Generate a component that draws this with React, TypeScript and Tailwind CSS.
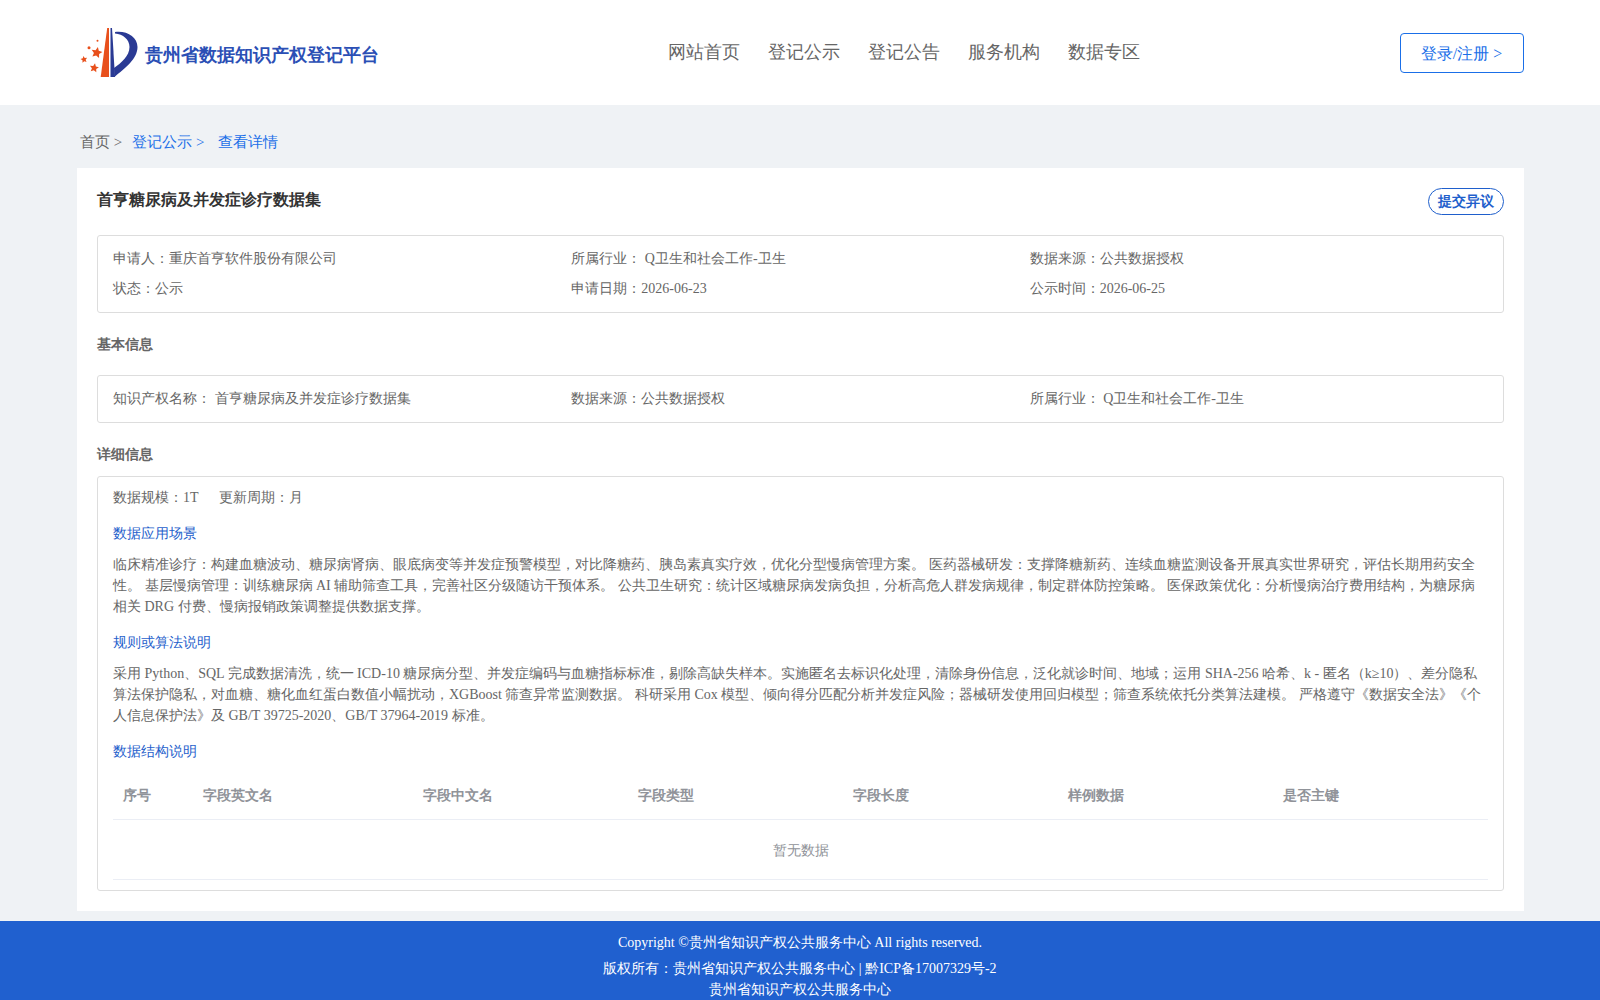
const serif = "font-['Liberation_Serif',serif]";

function star(cx: number, cy: number, r: number, rot: number) {
  const pts: string[] = [];
  for (let i = 0; i < 10; i++) {
    const rad = i % 2 === 0 ? r : r * 0.48;
    const a = ((-90 + rot + i * 36) * Math.PI) / 180;
    pts.push(`${(cx + rad * Math.cos(a)).toFixed(2)},${(cy + rad * Math.sin(a)).toFixed(2)}`);
  }
  return pts.join(" ");
}

function Logo() {
  return (
    <svg width="60" height="52" viewBox="0 0 60 52" className="shrink-0">
      <polygon points="20.7,50 29,50 29,1 27.2,1" fill="#e8501c" />
      <polygon points="30.5,50 35,50 32,1 30.5,1" fill="#2a3a94" />
      <path d="M35 5 C47 3.5 57.5 10 57.5 20 C57.5 32 45 41 34.5 50 L34 41 C41 36 49.5 29 49.5 20 C49.5 12.5 43 7 35 6.5 Z" fill="#2a3a94" />
      <polygon points={star(16.7, 25.7, 5.8, 12)} fill="#e8501c" />
      <polygon points={star(4, 32.5, 3.5, -10)} fill="#e8501c" />
      <polygon points={star(14.2, 41, 4.8, 10)} fill="#e8501c" />
      <circle cx="9" cy="20.7" r="1.5" fill="#e8501c" />
      <circle cx="17.5" cy="13.7" r="1" fill="#e8501c" />
    </svg>
  );
}

function Info({ children }: { children: React.ReactNode }) {
  return <div className="text-[14px] leading-[20px] text-[#666]">{children}</div>;
}

const cols = [
  ["序号", "w-[80px]"],
  ["字段英文名", "w-[220px]"],
  ["字段中文名", "w-[215px]"],
  ["字段类型", "w-[215px]"],
  ["字段长度", "w-[215px]"],
  ["样例数据", "w-[215px]"],
  ["是否主键", "flex-1"],
];

export default function App() {
  return (
    <div className={`${serif} w-[1600px] h-[1000px] overflow-hidden bg-[#eff2f5] flex flex-col`}>
      <header className="h-[105px] bg-white flex items-start justify-between pl-[80px] pr-[76px]">
        <div className="flex items-start mt-[27px] gap-[5px]">
          <Logo />
          <span className="text-[18px] leading-[26px] mt-[15px] font-bold text-[#2b4fb5]">贵州省数据知识产权登记平台</span>
        </div>
        <nav className="flex gap-[28px] mt-[39px] ml-[29px] text-[18px] leading-[26px] text-[#666]">
          <span>网站首页</span><span>登记公示</span><span>登记公告</span><span>服务机构</span><span>数据专区</span>
        </nav>
        <button className="mt-[33px] w-[124px] h-[40px] rounded-[4px] border border-[#1a6fe8] text-[#1a6fe8] text-[16px] bg-white pt-[1px] pr-[1px]">登录/注册 &gt;</button>
      </header>

      <div className="h-[63px] pl-[80px] pt-[28px] text-[15px] leading-[19px] flex">
        <span className="text-[#666]">首页 &gt;</span>
        <span className="text-[#1a6fe8] ml-[10px]">登记公示 &gt;</span>
        <span className="text-[#1a6fe8] ml-[14px]">查看详情</span>
      </div>

      <main className="ml-[77px] w-[1447px] h-[743px] bg-white px-[20px] pt-[20px]">
        <div className="flex justify-between items-start h-[47px]">
          <h1 className="text-[16px] leading-[24px] font-bold text-[#333]">首亨糖尿病及并发症诊疗数据集</h1>
          <button className="w-[76px] h-[27px] rounded-[14px] border border-[#1f5fcc] bg-white text-[14px] font-bold text-[#1f5fcc]">提交异议</button>
        </div>

        <section className="h-[78px] border border-[#ddd] rounded-[3px] px-[15px] pt-[13px] grid grid-cols-3 gap-y-[10px] content-start">
          <Info>申请人：重庆首亨软件股份有限公司</Info>
          <Info>所属行业： Q卫生和社会工作-卫生</Info>
          <Info>数据来源：公共数据授权</Info>
          <Info>状态：公示</Info>
          <Info>申请日期：2026-06-23</Info>
          <Info>公示时间：2026-06-25</Info>
        </section>

        <h2 className="mt-[22px] mb-[20px] text-[14px] leading-[20px] font-bold text-[#666]">基本信息</h2>

        <section className="h-[48px] border border-[#ddd] rounded-[3px] px-[15px] pt-[13px] grid grid-cols-3 content-start">
          <Info>知识产权名称： 首亨糖尿病及并发症诊疗数据集</Info>
          <Info>数据来源：公共数据授权</Info>
          <Info>所属行业： Q卫生和社会工作-卫生</Info>
        </section>

        <h2 className="mt-[22px] mb-[11px] text-[14px] leading-[20px] font-bold text-[#666]">详细信息</h2>

        <section className="h-[415px] border border-[#ddd] rounded-[3px] px-[15px] pt-[11px]">
          <div className="flex gap-[20px] text-[14px] leading-[20px] text-[#666]"><span>数据规模：1T</span><span>更新周期：月</span></div>
          <div className="mt-[16px] text-[14px] leading-[20px] text-[#1f5fcc]">数据应用场景</div>
          <p className="mt-[10px] text-[14px] leading-[21px] text-[#666]">临床精准诊疗：构建血糖波动、糖尿病肾病、眼底病变等并发症预警模型，对比降糖药、胰岛素真实疗效，优化分型慢病管理方案。 医药器械研发：支撑降糖新药、连续血糖监测设备开展真实世界研究，评估长期用药安全性。 基层慢病管理：训练糖尿病 AI 辅助筛查工具，完善社区分级随访干预体系。 公共卫生研究：统计区域糖尿病发病负担，分析高危人群发病规律，制定群体防控策略。 医保政策优化：分析慢病治疗费用结构，为糖尿病相关 DRG 付费、慢病报销政策调整提供数据支撑。</p>
          <div className="mt-[16px] text-[14px] leading-[20px] text-[#1f5fcc]">规则或算法说明</div>
          <p className="mt-[10px] text-[14px] leading-[21px] text-[#666]">采用 Python、SQL 完成数据清洗，统一 ICD-10 糖尿病分型、并发症编码与血糖指标标准，剔除高缺失样本。实施匿名去标识化处理，清除身份信息，泛化就诊时间、地域；运用 SHA-256 哈希、k - 匿名（k≥10）、差分隐私算法保护隐私，对血糖、糖化血红蛋白数值小幅扰动，XGBoost 筛查异常监测数据。 科研采用 Cox 模型、倾向得分匹配分析并发症风险；器械研发使用回归模型；筛查系统依托分类算法建模。 严格遵守《数据安全法》《个人信息保护法》及 GB/T 39725-2020、GB/T 37964-2019 标准。</p>
          <div className="mt-[16px] text-[14px] leading-[20px] text-[#1f5fcc]">数据结构说明</div>
          <div className="mt-[10px] h-[48px] flex items-center border-b border-[#ebeef5] text-[14px] font-bold text-[#909399] px-[10px]">
            {cols.map(([t, w]) => <div key={t} className={w}>{t}</div>)}
          </div>
          <div className="h-[60px] flex items-center justify-center border-b border-[#ebeef5] text-[14px] text-[#909399] pt-[1px]">暂无数据</div>
        </section>
      </main>

      <footer className="mt-[10px] flex-1 bg-[#2060cf] text-white text-[14px] text-center pt-[12px]">
        <div className="leading-[20px]">Copyright ©贵州省知识产权公共服务中心 All rights reserved.</div>
        <div className="leading-[20px] mt-[6px]">版权所有：贵州省知识产权公共服务中心 | 黔ICP备17007329号-2</div>
        <div className="leading-[20px] mt-[1px]">贵州省知识产权公共服务中心</div>
      </footer>
    </div>
  );
}
